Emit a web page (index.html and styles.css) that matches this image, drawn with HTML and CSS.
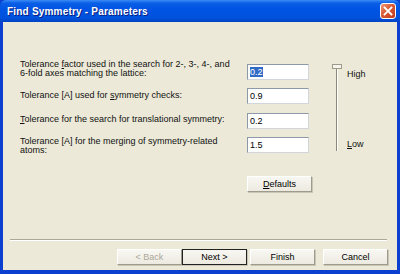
FILE: index.html
```html
<!DOCTYPE html>
<html>
<head>
<meta charset="utf-8">
<link rel="stylesheet" href="styles.css">
</head>
<body>
<div class="window">
  <div class="titlebar">
    <span class="title">Find Symmetry - Parameters</span>
    <span class="close">
      <svg width="10" height="10" viewBox="0 0 10 10"><path d="M1.5 1.5 L8.5 8.5 M8.5 1.5 L1.5 8.5" stroke="#fff" stroke-width="1.8" stroke-linecap="square"/></svg>
    </span>
  </div>
  <div class="body">
    <div class="form">
      <div class="label r1 two up">Tolerance <u>f</u>actor used in the search for 2-, 3-, 4-, and<br>6-fold axes matching the lattice:</div>
      <div class="field r1"><span class="sel">0.2</span></div>
      <div class="label r2">Tolerance [A] used for <u>s</u>ymmetry checks:</div>
      <div class="field r2">0.9</div>
      <div class="label r3 up1"><u>T</u>olerance for the search for translational symmetry:</div>
      <div class="field r3">0.2</div>
      <div class="label r4 two">Tolerance [A] for the merging of symmetry-related<br>atoms:</div>
      <div class="field r4">1.5</div>
      <div class="slider">
        <div class="track"></div>
        <div class="thumb"></div>
      </div>
      <div class="levels">
        <span>High</span>
        <span><u>L</u>ow</span>
      </div>
    </div>
    <div class="defaults-row">
      <button class="btn"><u>D</u>efaults</button>
    </div>
    <div class="sep"></div>
    <div class="buttons">
      <button class="btn disabled">&lt; Back</button>
      <button class="btn default">Next &gt;</button>
      <button class="btn finish">Finish</button>
      <button class="btn">Cancel</button>
    </div>
  </div>
</div>
</body>
</html>
```
FILE: styles.css
```css
html, body { margin: 0; padding: 0; }
body { width: 400px; height: 274px; overflow: hidden; font-family: "Liberation Sans", Arial, sans-serif; font-size: 9px; color: #000; }
.window { width: 400px; height: 274px; background: #0A3FD0; display: flex; flex-direction: column; }
.titlebar {
  height: 22px; flex: none; display: flex; align-items: center; justify-content: space-between;
  padding: 0 4px 0 7px;
  background: linear-gradient(to bottom, #3B8CF5 0%, #0A5FE6 14%, #0054E3 40%, #0052DD 80%, #0043C4 100%);
  border-radius: 6px 6px 0 0;
}
.title { color: #fff; font-weight: bold; font-size: 10px; letter-spacing: 0.2px; text-shadow: 1px 1px 0 #0A1E80; }
.close {
  width: 16px; height: 16px; box-sizing: border-box; border: 1px solid #fff; border-radius: 3px;
  background: linear-gradient(135deg, #EE9A7A 0%, #DA5A34 45%, #C23C1C 100%);
  display: flex; align-items: center; justify-content: center;
}
.body { flex: 1; margin: 0 3px 4px 3px; background: #ECE9D8; display: flex; flex-direction: column; }
.form {
  margin-top: 42px; margin-left: 17px;
  display: grid;
  grid-template-columns: 227px 62px 38px 40px;
  grid-template-rows: 24px 25px 24px 30px;
}
.label { grid-column: 1; line-height: 9px; padding-top: 3px; white-space: nowrap; color: #111; }
.label.two { padding-top: 0; line-height: 9px; }
.label.up { margin-top: -4px; }
.label.up1 { padding-top: 2px; }
.r1 { grid-row: 1; } .r2 { grid-row: 2; } .r3 { grid-row: 3; } .r4 { grid-row: 4; }
.field {
  grid-column: 2; height: 16px; box-sizing: border-box; border: 1px solid; border-color: #8E99A8 #D2D6DC #D2D6DC #8E99A8; background: #fff;
  padding: 2px 2px; line-height: 11px; font-size: 9px;
}
.sel { background: #316AC5; color: #fff; }
.slider { grid-column: 3; grid-row: 1 / 5; position: relative; }
.track { position: absolute; left: 27px; top: 2px; width: 1px; height: 85px; background: #8A8878; border-right: 1px solid #fff; }
.thumb { position: absolute; left: 23px; top: 0; width: 10px; height: 5px; background: #F5F4EE; border: 1px solid #9D9A88; box-sizing: border-box; }
.levels { grid-column: 4; grid-row: 1 / 5; display: flex; flex-direction: column; justify-content: space-between; padding: 5px 0 4px 0; height: 89px; box-sizing: border-box; color: #111; }
.btn {
  font-family: "Liberation Sans", Arial, sans-serif; font-size: 9px; color: #000;
  width: 65px; height: 16px; box-sizing: border-box; padding: 0; margin: 0;
  background: linear-gradient(#F8F7F2, #ECEAE0);
  border: 1px solid; border-color: #FFFFFF #9E9B8C #9E9B8C #FFFFFF;
  box-shadow: 1px 1px 0 #C9C6B8;
}
.defaults-row { margin-top: 9px; margin-left: 244px; height: 16px; }
.sep { margin: 47px 10px 0 7px; height: 1px; background: #ACA899; border-bottom: 1px solid #fff; }
.buttons { display: flex; margin-top: 8px; margin-left: 114px; }
.disabled { color: #ACA899; }
.default { border-color: #222; }
.finish { margin-left: 3px; margin-right: 8px; }
```
